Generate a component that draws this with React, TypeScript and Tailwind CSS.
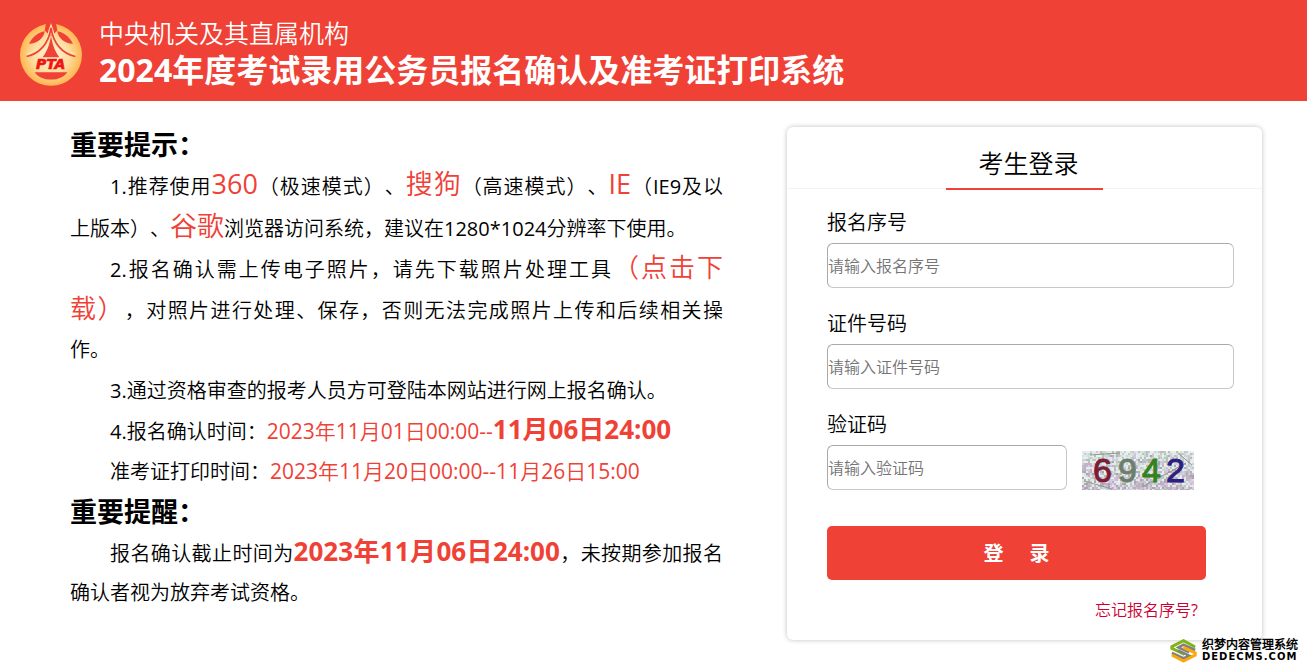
import { useState } from "react";

interface FieldProps {
    id: string;
    label: string;
    placeholder: string;
}

// Deterministic noise so the captcha keeps its grain between renders
const topColors = ["#dff0e6", "#e4f4ea", "#c9d8d2", "#d3e6dc", "#e9e4f4", "#b5c2ba", "#d0c4d6"];
const bottomColors = ["#c0a9c4", "#cdb9d2", "#dfeae4", "#a9a5ae", "#d6cbe2", "#bfc9c4", "#c7aec9"];
const noise = Array.from({ length: 56 * 20 }, (_, i) => {
    const n = Math.abs(Math.sin(i * 12.9898 + 4.1) * 43758.5453) % 1;
    const m = Math.abs(Math.sin(i * 78.233 + 1.7) * 12543.123) % 1;
    const row = Math.floor(i / 56);
    const colors = m > row / 20 ? topColors : bottomColors;
    return { x: (i % 56) * 2, y: row * 2, fill: colors[Math.floor(n * 7)] };
});

const digits = [
    { char: "6", x: 11, fill: "#7d1c38" },
    { char: "9", x: 36, fill: "#6b806a" },
    { char: "4", x: 60, fill: "#34821c" },
    { char: "2", x: 84, fill: "#2c1f80" },
];

function Logo() {
    return (
        <svg viewBox="0 0 186 188" className="h-[63px] w-[62px] shrink-0" role="img" aria-label="PTA">
            <defs>
                <radialGradient id="gold">
                    <stop offset="0" stopColor="#fff6dc" />
                    <stop offset="0.6" stopColor="#ffdc9c" />
                    <stop offset="1" stopColor="#ffb651" />
                </radialGradient>
            </defs>
            <circle cx="93" cy="95" r="93" fill="url(#gold)" />
            <path d="M78 0H108L112 22L93 40L74 22Z" fill="#ef4136" />
            <path d="M27 62C36 42 54 27 74 24C72 44 52 61 27 62Z" fill="#ef4136" />
            <path d="M159 62C150 42 132 27 112 24C114 44 134 61 159 62Z" fill="#ef4136" />
            <path d="M93 0L86 20C80 54 56 80 20 90V96C60 88 86 62 93 32C100 62 126 88 166 96V90C130 80 106 54 100 20Z" fill="#ffe3ae" />
            <path d="M93 14C86 62 58 92 20 100" fill="none" stroke="#ef4136" strokeWidth="5" />
            <path d="M93 14C100 62 128 92 166 100" fill="none" stroke="#ef4136" strokeWidth="5" />
            <path d="M93 38C90 60 82 84 68 102H118C104 84 96 60 93 38Z" fill="#ef4136" />
            <path d="M44 147H142C132 162 114 169 93 169S54 162 44 147Z" fill="#ef4136" />
            <text
                x="92"
                y="139"
                textAnchor="middle"
                fill="#f01414"
                stroke="#f01414"
                strokeWidth="2"
                className="font-['DejaVu_Sans'] text-[42px] font-bold italic"
            >
                PTA
            </text>
        </svg>
    );
}

function Captcha() {
    return (
        <svg viewBox="0 0 112 39" className="h-[39px] w-28" role="img" aria-label="6942">
            {noise.map((n, i) => (
                <rect key={i} x={n.x} y={n.y} width="2" height="2" fill={n.fill} />
            ))}
            <path d="M8 4L38 2M60 36L104 12M2 30L30 38M96 2L110 14" stroke="#8f9b90" strokeWidth="1" />
            {digits.map((d) => (
                <text
                    key={d.char}
                    x={d.x}
                    y="31"
                    fill={d.fill}
                    stroke={d.fill}
                    strokeWidth="1"
                    className="font-['Liberation_Sans'] text-[34px] font-normal"
                >
                    {d.char}
                </text>
            ))}
        </svg>
    );
}

function Watermark() {
    return (
        <div className="absolute right-[9px] bottom-[9px] flex items-center gap-[5px] text-black">
            <svg viewBox="0 0 78 72" className="h-6 w-[27px]" aria-hidden="true">
                <path d="M74 24L39 5L4 23V28L42 46" fill="none" stroke="#7fb414" strokeWidth="9" />
                <path d="M74 33L39 17L24 25L56 40M4 42L39 58L56 50L22 34" fill="none" stroke="#808080" strokeWidth="8" />
                <path d="M4 48L39 66L74 48V42L38 25" fill="none" stroke="#fba80a" strokeWidth="9" />
            </svg>
            <div>
                <p className="text-xs leading-3 font-black">织梦内容管理系统</p>
                <p className="font-['DejaVu_Sans'] text-[10px] leading-3 font-bold tracking-widest">DEDECMS.COM</p>
            </div>
        </div>
    );
}

// The DemiLight face has no bold of its own, so bold text names the main family
const boldClass = "font-['Open_Sans','Noto_Sans_CJK_SC',sans-serif] font-bold";

const inputClass =
    "h-[45px] rounded-md border border-t-[#a9a9a9] border-r-[#c8c8c8] border-b-[#c8c8c8] border-l-[#a9a9a9] bg-white text-base placeholder:text-[#757575]";

function Field({ id, label, placeholder }: FieldProps) {
    const [value, setValue] = useState("");

    return (
        <div className="mb-[22px]">
            <label htmlFor={id} className="mb-1.5 block leading-7">
                {label}
            </label>
            <input
                id={id}
                value={value}
                placeholder={placeholder}
                onChange={(e) => setValue(e.target.value)}
                className={`${inputClass} w-full`}
            />
        </div>
    );
}

function Big({ children }: { children: string }) {
    return <span className="text-[27px] text-[#ef4136]">{children}</span>;
}

export default function App() {
    const [code, setCode] = useState("");

    return (
        <div className="relative min-h-screen bg-white font-['Open_Sans','Noto_Sans_CJK_SC_DemiLight','Noto_Sans_CJK_SC',sans-serif] text-xl text-black [text-spacing-trim:space-all]">
            {/* Header */}
            <header className="flex items-center gap-[17px] bg-[#ef4136] px-5 pt-[17px] pb-[10px] text-white">
                <Logo />
                <div>
                    <p className="text-[25px] leading-8">中央机关及其直属机构</p>
                    <h1 className={`${boldClass} text-[32px] leading-[42px]`}>2024年度考试录用公务员报名确认及准考证打印系统</h1>
                </div>
            </header>

            <main className="flex items-start gap-16 pt-6 pr-[45px] pb-8 pl-[70px]">
                {/* Notices */}
                <section className="flex-1 text-justify leading-[39px]">
                    <h2 className={`${boldClass} text-[27px] leading-[39px]`}>重要提示：</h2>
                    <p className="indent-10">
                        1.推荐使用<Big>360</Big>（极速模式）、<Big>搜狗</Big>（高速模式）、<Big>IE</Big>（IE9及以
                        <span className="whitespace-nowrap">上版本）、</span>
                        <Big>谷歌</Big>浏览器访问系统，建议在1280*1024分辨率下使用。
                    </p>
                    <p className="mb-0.5 indent-10">
                        2.报名确认需上传电子照片，请先下载照片处理工具
                        <a href="#download" className="text-[26px] text-[#ef4136]">（点击下载）</a>
                        ，对照片进行处理、保存，否则无法完成照片上传和后续相关操
                        <span className="inline-block w-20 indent-0">作。</span>
                    </p>
                    <p className="indent-10">3.通过资格审查的报考人员方可登陆本网站进行网上报名确认。</p>
                    <p className="indent-10">
                        4.报名确认时间：
                        <span className="text-[21px] text-[#ef4136]">
                            2023年11月01日00:00--<b className={`${boldClass} text-[26px]`}>11月06日24:00</b>
                        </span>
                    </p>
                    <p className="indent-10 leading-10">
                        准考证打印时间：
                        <span className="text-[21px] text-[#ef4136]">2023年11月20日00:00--11月26日15:00</span>
                    </p>
                    <h2 className={`${boldClass} text-[27px] leading-10`}>重要提醒：</h2>
                    <p className="indent-10">
                        报名确认截止时间为<b className={`${boldClass} text-[26px] text-[#ef4136]`}>2023年11月06日24:00</b>
                        ，未按期参加报名确认者视为放弃考试资格。
                    </p>
                </section>

                {/* Login card */}
                <form
                    className="mt-0.5 w-[475px] rounded-md bg-white pb-4 shadow-[0_0_5px_rgba(0,0,0,0.25)]"
                    onSubmit={(e) => e.preventDefault()}
                >
                    <div className="flex h-[62px] justify-center border-b border-[#f3f3f3]">
                        <h2 className="h-[63px] w-[157px] border-b-2 border-[#ef4136] pt-4 pl-2 text-center text-[25px] leading-10">
                            考生登录
                        </h2>
                    </div>
                    <div className="pt-5 pr-7 pl-10">
                        <Field id="serial" label="报名序号" placeholder="请输入报名序号" />
                        <Field id="card" label="证件号码" placeholder="请输入证件号码" />
                        <label htmlFor="code" className="mb-1.5 block leading-7">
                            验证码
                        </label>
                        <div className="flex items-end gap-[15px]">
                            <input
                                id="code"
                                value={code}
                                placeholder="请输入验证码"
                                onChange={(e) => setCode(e.target.value)}
                                className={`${inputClass} w-60`}
                            />
                            <Captcha />
                        </div>
                        <div className="mt-9 pr-7">
                            <button type="submit" className={`${boldClass} h-[54px] w-full rounded-[5px] bg-[#ef4136] pt-0.5 text-white`}>
                                登&nbsp;&nbsp;&nbsp;&nbsp;&nbsp;录
                            </button>
                            <div className="mt-4 pr-2 text-right text-base leading-7">
                                <a href="#forgot" className="text-[#cc0033]">
                                    忘记报名序号?
                                </a>
                            </div>
                        </div>
                    </div>
                </form>
            </main>

            <Watermark />
        </div>
    );
}
